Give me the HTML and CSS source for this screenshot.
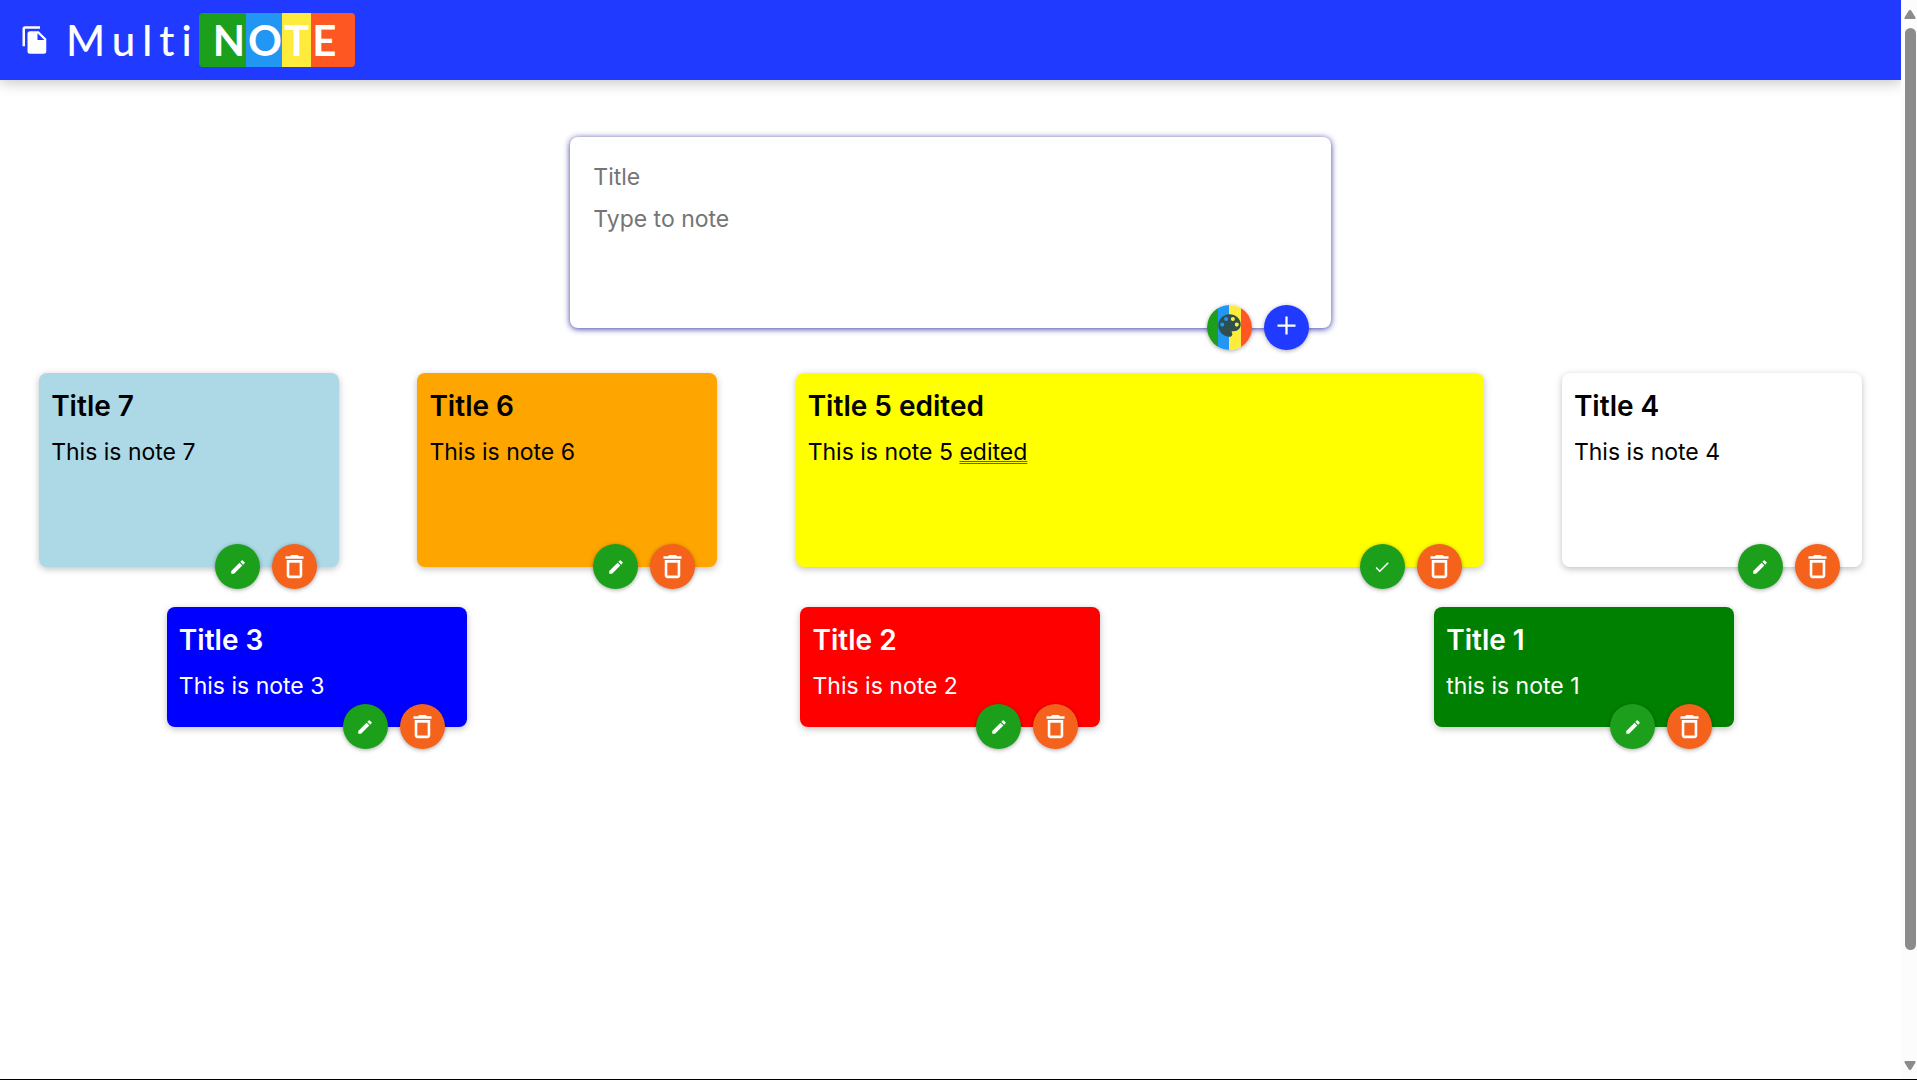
FILE: index.html
```html
<!DOCTYPE html>
<html lang="en">
<head>
<meta charset="utf-8">
<meta name="viewport" content="width=device-width, initial-scale=1">
<title>MultiNOTE</title>
<link rel="stylesheet" href="styles.css">
</head>
<body>
<svg class="sprite" aria-hidden="true">
  <symbol id="pencil" viewBox="0 0 24 24"><path d="M3 17.250V21h3.750L17.810 9.940l-3.750-3.750L3 17.250zM20.710 7.040a1 1 0 0 0 0-1.410l-2.340-2.340a1 1 0 0 0-1.410 0l-1.830 1.830 3.750 3.750 1.830-1.830z"/></symbol>
  <symbol id="check" viewBox="0 0 24 24"><path d="M9 16.170 4.830 12l-1.420 1.410L9 19 21 7l-1.410-1.410z"/></symbol>
  <symbol id="trash" viewBox="0 0 24 24"><path d="M6 19c0 1.100.9 2 2 2h8c1.100 0 2-.9 2-2V7H6v12zM8 9h8v10H8V9zm7.500-5-1-1h-5l-1 1H5v2h14V4h-3.500z"/></symbol>
</svg>
<div class="app">
  <div class="page">
    <header class="topbar">
      <svg class="logo-icon" viewBox="0 0 24 24" aria-hidden="true"><path d="M16 1H4a2 2 0 0 0-2 2v14h2V3h12V1zm-1 4 6 6v10a2 2 0 0 1-2 2H7.990A1.990 1.990 0 0 1 6 21l.01-14c0-1.100.89-2 1.990-2h7zm-1 7h5.500L14 6.500V12z"/></svg>
      <h1 class="brand">Multi<span class="brand-badge">NOTE</span></h1>
    </header>
    <main>
      <form class="composer">
        <input class="field" type="text" placeholder="Title" aria-label="Title">
        <textarea class="field area" placeholder="Type to note" aria-label="Note"></textarea>
        <div class="actions">
          <button class="round palette" type="button" aria-label="Choose color"><svg viewBox="0 0 24 24"><path d="M12 2C6.490 2 2 6.490 2 12s4.490 10 10 10a2.500 2.500 0 0 0 2.500-2.500c0-.61-.23-1.200-.64-1.670a.53.53 0 0 1-.13-.33c0-.28.22-.5.5-.5H16c3.310 0 6-2.690 6-6 0-4.960-4.490-9-10-9zM5.500 13a1.800 1.800 0 1 1 0-3.600 1.800 1.800 0 0 1 0 3.600zm3.500-5a1.800 1.800 0 1 1 0-3.600 1.800 1.800 0 0 1 0 3.600zm6 0a1.800 1.800 0 1 1 0-3.600 1.800 1.800 0 0 1 0 3.600zm3.500 5a1.800 1.800 0 1 1 0-3.600 1.800 1.800 0 0 1 0 3.600z"/></svg></button>
          <button class="round add" type="button" aria-label="Add note"><svg viewBox="0 0 24 24"><path d="M20 13h-7v7h-2v-7H4v-2h7V4h2v7h7v2z"/></svg></button>
        </div>
      </form>
      <section class="notes" aria-label="Notes">
        <article class="note lightblue"><h2>Title 7</h2><p>This is note 7</p>
          <div class="actions"><button class="round edit" aria-label="Edit"><svg><use href="#pencil"/></svg></button><button class="round delete" aria-label="Delete"><svg><use href="#trash"/></svg></button></div></article>
        <article class="note orange"><h2>Title 6</h2><p>This is note 6</p>
          <div class="actions"><button class="round edit" aria-label="Edit"><svg><use href="#pencil"/></svg></button><button class="round delete" aria-label="Delete"><svg><use href="#trash"/></svg></button></div></article>
        <article class="note yellow editing"><h2 contenteditable="true" spellcheck="false">Title 5 edited</h2><p contenteditable="true" spellcheck="false">This is note 5 <span class="flagged">edited</span></p>
          <div class="actions"><button class="round edit" aria-label="Save"><svg><use href="#check"/></svg></button><button class="round delete" aria-label="Delete"><svg><use href="#trash"/></svg></button></div></article>
        <article class="note white"><h2>Title 4</h2><p>This is note 4</p>
          <div class="actions"><button class="round edit" aria-label="Edit"><svg><use href="#pencil"/></svg></button><button class="round delete" aria-label="Delete"><svg><use href="#trash"/></svg></button></div></article>
        <article class="note blue"><h2>Title 3</h2><p>This is note 3</p>
          <div class="actions"><button class="round edit" aria-label="Edit"><svg><use href="#pencil"/></svg></button><button class="round delete" aria-label="Delete"><svg><use href="#trash"/></svg></button></div></article>
        <article class="note red"><h2>Title 2</h2><p>This is note 2</p>
          <div class="actions"><button class="round edit" aria-label="Edit"><svg><use href="#pencil"/></svg></button><button class="round delete" aria-label="Delete"><svg><use href="#trash"/></svg></button></div></article>
        <article class="note green"><h2>Title 1</h2><p>this is note 1</p>
          <div class="actions"><button class="round edit" aria-label="Edit"><svg><use href="#pencil"/></svg></button><button class="round delete" aria-label="Delete"><svg><use href="#trash"/></svg></button></div></article>
      </section>
    </main>
  </div>
  <div class="scrollbar" aria-hidden="true">
    <svg class="arrow" viewBox="0 0 12 9"><path d="M6 0Q7 0 7.500 1L11.500 7.500Q12 9 10.500 9H1.500Q0 9 .5 7.500L4.500 1Q5 0 6 0z"/></svg>
    <div class="track"><div class="thumb"></div></div>
    <svg class="arrow" viewBox="0 0 12 9"><path d="M6 9Q7 9 7.500 8L11.500 1.500Q12 0 10.500 0H1.500Q0 0 .5 1.500L4.500 8Q5 9 6 9z"/></svg>
  </div>
</div>
</body>
</html>
```
FILE: styles.css
```css
* {
  box-sizing: border-box;
}

body {
  margin: 0;
  background: #fff;
  color: #000;
  font-family: Inter, "Liberation Sans", sans-serif;
  font-size: 23px;
  line-height: 36px;
}

.sprite {
  display: none;
}

.app {
  display: grid;
  grid-template-columns: 1fr 16px;
  height: 100vh;
  border-bottom: 1px solid #000;
}

.page {
  min-width: 0;
  overflow: hidden;
}

/* Header */
.topbar {
  display: flex;
  align-items: center;
  gap: 16px;
  height: 80px;
  padding: 0 20px;
  background: #203bff;
  color: #fff;
  box-shadow: 0 2px 14px rgba(0, 0, 0, 0.25);
}

.logo-icon {
  width: 30px;
  height: 30px;
  fill: #fff;
}

.brand {
  display: flex;
  align-items: center;
  margin: 0;
  font-family: Lato, sans-serif;
  font-size: 42px;
  font-weight: 500;
  line-height: 54px;
  letter-spacing: 7px;
}

.brand-badge {
  padding: 0 16px 0 14px;
  border-radius: 4px;
  background: linear-gradient(90deg, #1ca01c 30%, #2196f3 30% 53%, #ffeb3b 53% 72%, #ff5722 72%);
  font-weight: 700;
  letter-spacing: 3px;
}

/* New note form */
.composer {
  position: relative;
  display: flex;
  flex-direction: column;
  gap: 6px;
  width: 40%;
  margin: 57px auto 25px;
  padding: 22px 23px 20px;
  border-radius: 8px;
  background: #fff;
  box-shadow: 0 1px 6px rgba(32, 33, 157, 0.9);
}

.field {
  width: 100%;
  height: 36px;
  margin: 0;
  padding: 0;
  border: 0;
  outline: 0;
  background: transparent;
  color: #000;
  font: inherit;
  resize: none;
}

.field::placeholder {
  color: #757575;
}

.area {
  height: 107px;
}

/* Round buttons */
.actions {
  position: absolute;
  right: 22px;
  bottom: -22px;
  display: flex;
  gap: 12px;
}

.round {
  display: grid;
  place-items: center;
  width: 45px;
  height: 45px;
  padding: 0;
  border: 0;
  border-radius: 50%;
  color: #fff;
  box-shadow: 0 1px 4px rgba(0, 0, 0, 0.35);
  cursor: pointer;
}

.round svg {
  width: 18px;
  height: 18px;
  fill: currentColor;
}

.palette {
  padding-bottom: 5px;
  background: linear-gradient(90deg, #1ca01c 25%, #2196f3 25% 50%, #ffeb3b 50% 75%, #ff5722 75%);
  color: #2f4f4f;
}

.add {
  padding-bottom: 5px;
  background: #203bff;
}

.palette svg,
.add svg {
  width: 27px;
  height: 27px;
}

.delete svg {
  width: 31px;
  height: 31px;
}

.edit {
  background: #1ca01c;
}

.delete {
  background: #f4621c;
}

/* Notes */
.notes {
  display: flex;
  flex-wrap: wrap;
  justify-content: space-around;
}

.note {
  position: relative;
  width: 300px;
  min-height: 120px;
  margin: 20px;
  padding: 15px 12px 23px;
  border-radius: 8px;
  box-shadow: 0 2px 7px rgba(0, 0, 0, 0.25);
}

.note h2 {
  margin: 0 0 10px;
  font-size: 28px;
  font-weight: 600;
  line-height: 36px;
}

.note p {
  margin: 0;
}

.editing {
  width: 688px;
  min-height: 194px;
}

.flagged {
  text-decoration: underline double #3a5bb5 1px;
}

.lightblue { background: lightblue; }
.orange { background: orange; }
.yellow { background: yellow; }
.white { background: white; }
.blue { background: blue; color: #fff; }
.red { background: red; color: #fff; }
.green { background: green; color: #fff; }

/* Scrollbar */
.scrollbar {
  display: flex;
  flex-direction: column;
  align-items: center;
  gap: 9px;
  padding: 10px 0 9px 2px;
  background: #fcfcfc;
}

.arrow {
  width: 12px;
  height: 9px;
  fill: #8b8b8b;
}

.track {
  flex: 1;
  width: 11px;
}

.thumb {
  height: 90%;
  border-radius: 6px;
  background: #8b8b8b;
}
```
